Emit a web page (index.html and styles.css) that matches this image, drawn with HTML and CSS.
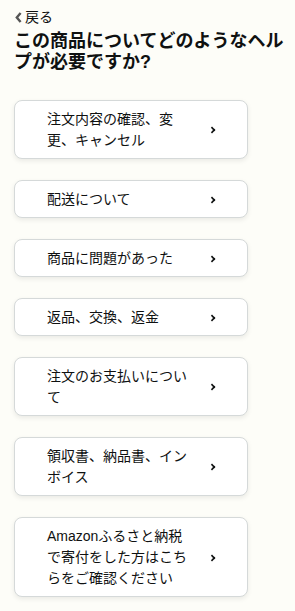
FILE: index.html
```html
<!DOCTYPE html>
<html lang="ja">
<head>
  <meta charset="UTF-8" />
  <meta name="viewport" content="width=device-width, initial-scale=1.0"/>
  <title>ヘルプ</title>
  <link rel="stylesheet" href="styles.css">
</head>
<body>
  <a class="back" href="#">
    <svg class="back-icon" width="7" height="11" viewBox="0 0 7 11"><path d="M5.6 1 L1.8 5.5 L5.6 10" fill="none" stroke="#555" stroke-width="2.4"/></svg>戻る
  </a>

  <h1 class="title">この商品についてどのようなヘルプが必要ですか?</h1>

  <div class="list">
    <a class="item" href="#"><span class="label">注文内容の確認、変更、キャンセル</span><span class="chev"></span></a>
    <a class="item" href="#"><span class="label">配送について</span><span class="chev"></span></a>
    <a class="item" href="#"><span class="label">商品に問題があった</span><span class="chev"></span></a>
    <a class="item" href="#"><span class="label">返品、交換、返金</span><span class="chev"></span></a>
    <a class="item" href="#"><span class="label">注文のお支払いについて</span><span class="chev"></span></a>
    <a class="item" href="#"><span class="label">領収書、納品書、インボイス</span><span class="chev"></span></a>
    <a class="item" href="#"><span class="label">Amazonふるさと納税で寄付をした方はこちらをご確認ください</span><span class="chev"></span></a>
  </div>
</body>
</html>
```

FILE: styles.css
```css
body {
  margin: 0;
  padding: 7px 6px 20px 14px;
  font-family: 'Liberation Sans', 'Noto Sans CJK JP', sans-serif;
  background-color: #fdfdf8;
  color: #0f1111;
}

a {
  color: inherit;
  text-decoration: none;
}

.back {
  display: flex;
  align-items: center;
  font-size: 14px;
  line-height: 20px;
}

.back-icon {
  margin: 0 3px 0 1px;
}

.title {
  margin: 4px 0 0;
  font-size: 18px;
  line-height: 21px;
  font-weight: bold;
}

.list {
  display: flex;
  flex-direction: column;
  gap: 21px;
  margin-top: 27px;
  width: 234px;
}

.item {
  display: flex;
  align-items: center;
  gap: 14px;
  padding: 7.5px 32px;
  background: #fff;
  border: 1px solid #d5d9d9;
  border-radius: 8px;
  box-shadow: 0 2px 5px rgba(15, 17, 17, 0.08);
  font-size: 14px;
  line-height: 21px;
}

.label {
  flex: 1;
}

.chev {
  width: 6px;
  height: 9px;
  flex: none;
  position: relative;
}

.chev::before {
  content: "";
  position: absolute;
  left: 0;
  top: 2px;
  width: 4px;
  height: 4px;
  border-top: 2px solid #0f1111;
  border-right: 2px solid #0f1111;
  transform: rotate(45deg) scale(0.8);
}
```
